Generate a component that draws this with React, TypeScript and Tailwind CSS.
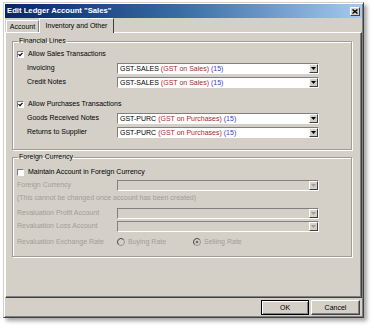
import React from 'react';

const Combo: React.FC<{ disabled?: boolean; children?: React.ReactNode }> = ({ disabled, children }) => {
  return (
    <div
      className={`flex h-[11px] w-[202px] border border-t-[#808080] border-l-[#808080] border-b-white border-r-white ${
        disabled ? 'bg-[#d4d0c8]' : 'bg-white'
      }`}
    >
      <div className="flex flex-1 items-center overflow-hidden whitespace-nowrap pl-[2px] leading-none">{children}</div>
      <div className="flex w-[9px] items-center justify-center border border-t-white border-l-white border-r-[#404040] border-b-[#404040] bg-[#d4d0c8]">
        <svg width="5" height="3" viewBox="0 0 5 3">
          <path d="M0 0h5L2.5 3z" fill={disabled ? '#a09d97' : '#000'} />
        </svg>
      </div>
    </div>
  );
};

const Check: React.FC<{ checked?: boolean }> = ({ checked }) => (
  <div className="flex h-[7px] w-[7px] items-center justify-center border border-t-[#808080] border-l-[#808080] border-b-white border-r-white bg-white">
    {checked && (
      <svg width="5" height="5" viewBox="0 0 5 5">
        <path d="M0.5 2.2L2 3.7L4.5 0.8" stroke="#000" strokeWidth="1.2" fill="none" />
      </svg>
    )}
  </div>
);

const Radio: React.FC<{ checked?: boolean }> = ({ checked }) => (
  <svg width="8" height="8" viewBox="0 0 8 8">
    <circle cx="4" cy="4" r="3.5" fill="#d4d0c8" stroke="#9a968f" strokeWidth="1" />
    <path d="M1.5 6.5A3.5 3.5 0 0 1 6.5 1.5" stroke="#5a5853" strokeWidth="1" fill="none" />
    {checked && <circle cx="4" cy="4" r="1.3" fill="#6f6c66" />}
  </svg>
);

const GstValue: React.FC<{ code: string; name: string }> = ({ code, name }) => (
  <span>
    <span className="text-black">{code} </span>
    <span className="text-[#a52a2a]">({name}) </span>
    <span className="text-[#3a3ad0]">(15)</span>
  </span>
);

const App: React.FC = () => {
  return (
    <div className="h-[328px] w-[374px] overflow-hidden bg-white pl-[3px] pt-[2px] font-['Liberation_Sans',Arial,sans-serif] text-[7px] text-black">
      <div className="flex h-[316px] w-[361px] flex-col border border-[#d4d0c8] border-r-[#404040] border-b-[#404040] bg-[#d4d0c8] p-[1px] shadow-[inset_1px_1px_0_#fff,inset_-1px_-1px_0_#808080,3px_3px_4px_rgba(0,0,0,0.35)]">
        {/* title bar */}
        <div className="flex h-[14px] items-center justify-between bg-gradient-to-r from-[#0a246a] via-[#3a6ea5] to-[#a6caf0] pl-[2px] pr-[2px]">
          <span className="text-[7.7px] font-bold leading-none text-white">Edit Ledger Account "Sales"</span>
          <div className="flex h-[9px] w-[10px] items-center justify-center border border-t-white border-l-white border-r-[#404040] border-b-[#404040] bg-[#d4d0c8]">
            <svg width="6" height="5" viewBox="0 0 6 5">
              <path d="M0.5 0.5L5.5 4.5M5.5 0.5L0.5 4.5" stroke="#000" strokeWidth="1.4" />
            </svg>
          </div>
        </div>

        {/* tabs */}
        <div className="relative z-10 flex h-[14px] items-end pl-[1px]">
          <div className="flex h-[12px] w-[33px] items-center justify-center border border-b-0 border-t-white border-l-white border-r-[#808080] bg-[#d4d0c8] leading-none">
            Account
          </div>
          <div className="-mb-[1px] flex h-[15px] w-[75px] items-center justify-center border border-b-0 border-t-white border-l-white border-r-[#404040] bg-[#d4d0c8] pb-[1px] leading-none">
            Inventory and Other
          </div>
        </div>

        {/* tab panel */}
        <div className="flex h-[266px] flex-col border border-t-white border-l-white border-r-[#404040] border-b-[#404040] px-[6px] pt-[3px] shadow-[inset_-1px_-1px_0_#808080]">
          <fieldset className="mr-[3px] border border-[#a09d97] px-[4px] pb-[10px] pt-[1px] shadow-[1px_1px_0_#fff,inset_1px_1px_0_#fff]">
            <legend className="ml-[1px] h-[10px] px-[1px] leading-[10px]">Financial Lines</legend>
            <div className="flex h-[14px] items-center gap-[4px]">
              <Check checked />
              <span>Allow Sales Transactions</span>
            </div>
            <div className="flex h-[14px] items-center">
              <span className="w-[100px] pl-[10px]">Invoicing</span>
              <Combo>
                <GstValue code="GST-SALES" name="GST on Sales" />
              </Combo>
            </div>
            <div className="flex h-[14px] items-center">
              <span className="w-[100px] pl-[10px]">Credit Notes</span>
              <Combo>
                <GstValue code="GST-SALES" name="GST on Sales" />
              </Combo>
            </div>
            <div className="h-[8px]" />
            <div className="flex h-[14px] items-center gap-[4px]">
              <Check checked />
              <span>Allow Purchases Transactions</span>
            </div>
            <div className="flex h-[14px] items-center">
              <span className="w-[100px] pl-[10px]">Goods Received Notes</span>
              <Combo>
                <GstValue code="GST-PURC" name="GST on Purchases" />
              </Combo>
            </div>
            <div className="flex h-[14px] items-center">
              <span className="w-[100px] pl-[10px]">Returns to Supplier</span>
              <Combo>
                <GstValue code="GST-PURC" name="GST on Purchases" />
              </Combo>
            </div>
          </fieldset>

          <fieldset className="mr-[3px] mt-[2px] border border-[#a09d97] px-[4px] pb-[7px] pt-[3px] shadow-[1px_1px_0_#fff,inset_1px_1px_0_#fff]">
            <legend className="ml-[1px] h-[10px] px-[1px] leading-[10px]">Foreign Currency</legend>
            <div className="flex h-[14px] items-center gap-[4px]">
              <Check />
              <span>Maintain Account in Foreign Currency</span>
            </div>
            <div className="flex h-[13px] items-center text-[#a09d97]">
              <span className="w-[100px]">Foreign Currency</span>
              <Combo disabled />
            </div>
            <div className="flex h-[13px] items-center text-[#a09d97]">
              (This cannot be changed once account has been created)
            </div>
            <div className="h-[2px]" />
            <div className="flex h-[13px] items-center text-[#a09d97]">
              <span className="w-[100px]">Revaluation Profit Account</span>
              <Combo disabled />
            </div>
            <div className="flex h-[13px] items-center text-[#a09d97]">
              <span className="w-[100px]">Revaluation Loss Account</span>
              <Combo disabled />
            </div>
            <div className="h-[2px]" />
            <div className="flex h-[14px] items-center text-[#a09d97]">
              <span className="w-[100px]">Revaluation Exchange Rate</span>
              <div className="flex w-[76px] items-center gap-[3px]">
                <Radio />
                <span>Buying Rate</span>
              </div>
              <div className="flex items-center gap-[3px]">
                <Radio checked />
                <span>Selling Rate</span>
              </div>
            </div>
          </fieldset>
        </div>

        {/* buttons */}
        <div className="flex flex-1 items-center justify-end gap-[2px] pr-[2px]">
          <button className="h-[15px] w-[48px] border border-black bg-[#d4d0c8] leading-none shadow-[inset_1px_1px_0_#fff,inset_-1px_-1px_0_#808080]">
            OK
          </button>
          <button className="h-[15px] w-[49px] border border-t-white border-l-white border-r-[#404040] border-b-[#404040] bg-[#d4d0c8] leading-none shadow-[inset_-1px_-1px_0_#808080]">
            Cancel
          </button>
        </div>
      </div>
    </div>
  );
};

export default App;
